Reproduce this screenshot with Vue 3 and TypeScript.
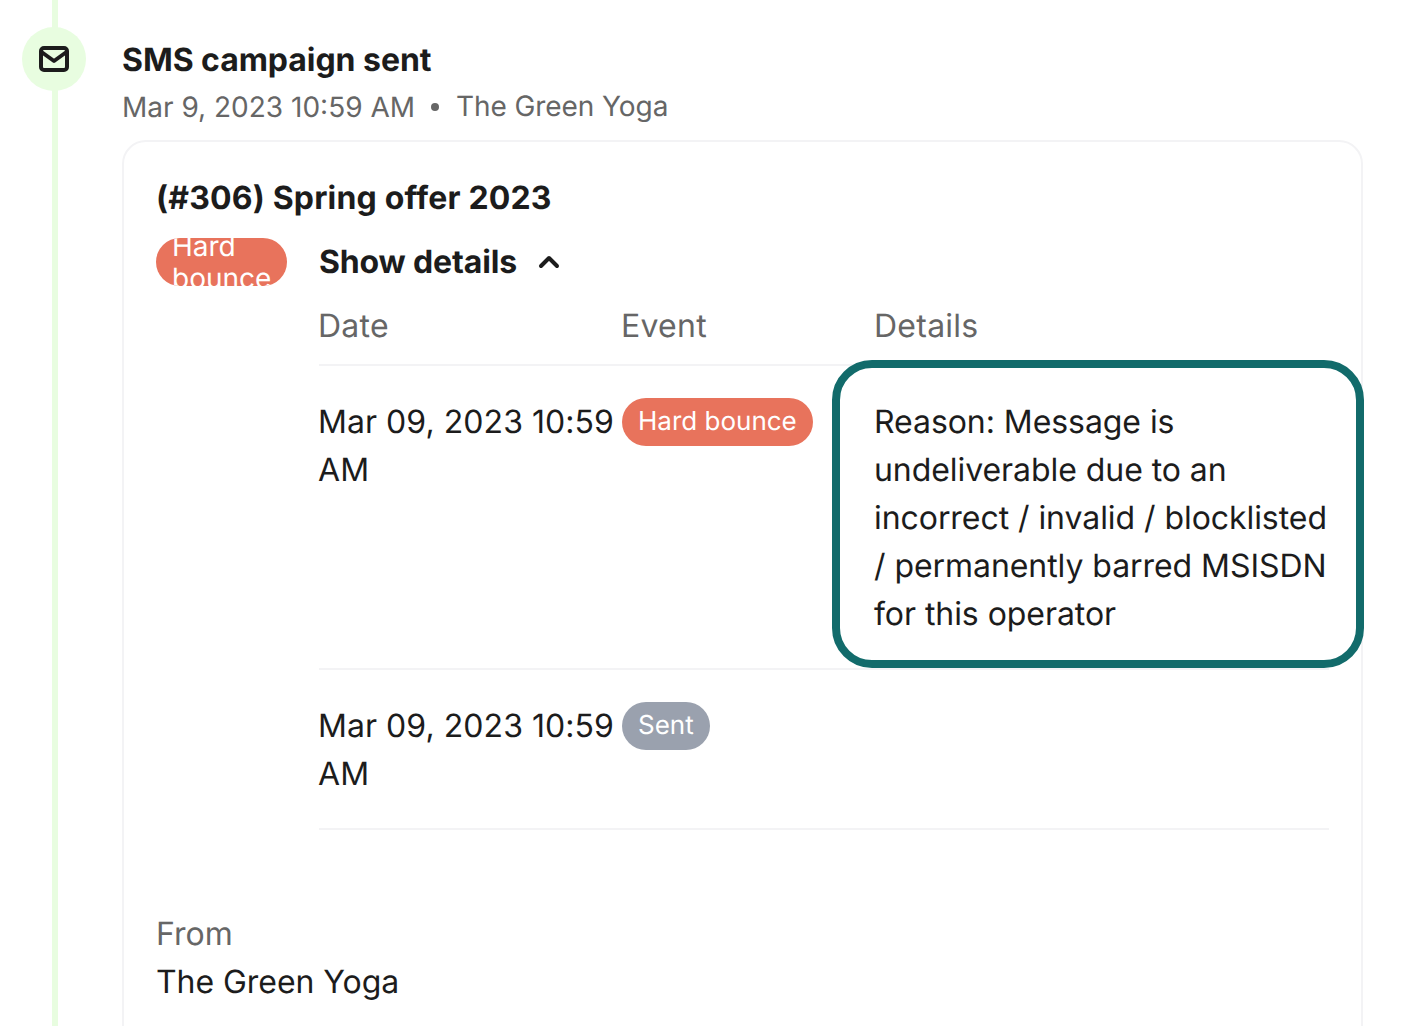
<script setup lang="ts">
interface Row { date: string; event: string; kind: string; details: string }
const rows: Row[] = [
  { date: 'Mar 09, 2023 10:59 AM', event: 'Hard bounce', kind: 'bounce', details: 'Reason: Message is undeliverable due to an incorrect / invalid / blocklisted / permanently barred MSISDN for this operator' },
  { date: 'Mar 09, 2023 10:59 AM', event: 'Sent', kind: 'sent', details: '' },
]
</script>

<template>
  <div class="page">
    <div class="rail"><div class="line"></div>
      <div class="dot">
        <svg width="34" height="30" viewBox="0 0 34 30" fill="none" stroke="#1c1c1c" stroke-width="4" stroke-linejoin="round" stroke-linecap="round">
          <rect x="4" y="4" width="26" height="22" rx="3" />
          <path d="M4.5 8 L17 17 L29.5 8" />
        </svg>
      </div>
    </div>
    <div class="main">
      <h1 class="title">SMS campaign sent</h1>
      <div class="meta"><span>Mar 9, 2023 10:59 AM</span><i class="sep"></i><span class="org">The Green Yoga</span></div>
      <section class="card">
        <h2 class="name">(#306) Spring offer 2023</h2>
        <div class="body">
          <span class="badge bounce wrap"><span>Hard bounce</span></span>
          <div class="detail">
            <div class="toggle">
              <span>Show details</span>
              <svg width="24" height="16" viewBox="0 0 24 16" fill="none" stroke="#1c1c1c" stroke-width="4" stroke-linecap="round" stroke-linejoin="round"><path d="M4 12 L12 4 L20 12" /></svg>
            </div>
            <table class="events">
              <thead><tr><th class="c1"><div class="nudge">Date</div></th><th class="c2"><div class="nudge">Event</div></th><th><div class="nudge">Details</div></th></tr></thead>
              <tbody>
                <tr v-for="(r, i) in rows" :key="i">
                  <td class="c1"><div class="nudge date">{{ r.date }}</div></td>
                  <td class="c2"><span class="badge" :class="r.kind">{{ r.event }}</span></td>
                  <td><div class="nudge reason">{{ r.details }}</div></td>
                </tr>
              </tbody>
            </table>
            <div class="highlight"></div>
          </div>
        </div>
        <div class="from">
          <div class="label">From</div>
          <div class="sender">The Green Yoga</div>
        </div>
      </section>
    </div>
  </div>
</template>

<style>
html, body { margin: 0; background: #fff; overflow: hidden; }
</style>

<style scoped>
.page { width: 1414px; height: 1026px; overflow: hidden; display: flex; font-family: Inter, sans-serif; font-size: 32px; line-height: 48px; color: #1c1c1c; background: #fff; padding-left: 22px; padding-right: 51px; box-sizing: border-box; text-rendering: geometricPrecision; }
.rail { width: 64px; position: relative; flex: none; margin-right: 36px; }
.line { position: absolute; left: 30px; top: 0; bottom: 0; width: 6px; background: #e8fde0; }
.dot { position: absolute; left: 0; top: 27px; width: 64px; height: 64px; border-radius: 50%; background: #e8fde0; display: flex; align-items: center; justify-content: center; }
.main { flex: 1; min-width: 0; padding-top: 36px; }
.title { margin: 0; font-size: 32px; line-height: 48px; font-weight: 700; letter-spacing: -0.05px; }
.meta { display: flex; align-items: center; font-size: 28px; line-height: 48px; height: 46px; color: #666; margin-bottom: 10px; }
.sep { width: 8px; height: 8px; border-radius: 50%; background: #666; margin: 0 18px 0 16px; }
.org { position: relative; top: -1px; letter-spacing: -0.08px; margin-left: -1px; }
.card { border: 2px solid #f3f3f5; border-radius: 24px; padding: 32px; min-height: 1000px; box-sizing: border-box; }
.name { margin: 0 0 16px; font-size: 32px; line-height: 48px; font-weight: 700; letter-spacing: 0.17px; }
.body { display: flex; align-items: flex-start; gap: 32px; }
.badge { display: inline-flex; align-items: center; height: 48px; padding: 0 16px; border-radius: 24px; color: #fff; font-size: 26px; line-height: 32px; box-sizing: border-box; overflow: hidden; white-space: nowrap; vertical-align: top; }
.badge.wrap { width: 131px; flex: none; white-space: normal; font-size: 28px; }
.bounce { background: #e8735c; }
.sent { background: #9aa1ae; }
.detail { flex: 1; position: relative; min-width: 0; }
.toggle { display: flex; align-items: center; gap: 20px; font-weight: 700; margin: 0 0 16px; letter-spacing: -0.15px; }
.events { width: 100%; border-collapse: collapse; table-layout: fixed; }
.events th { text-align: left; font-weight: 400; color: #666; padding: 0 0 14px; border-bottom: 2px solid #f3f3f5; letter-spacing: 0.25px; }
.events td { vertical-align: top; padding: 32px 0 30px; border-bottom: 2px solid #f3f3f5; }
.nudge { margin-left: -1px; }
.date { letter-spacing: 0.05px; }
.reason { letter-spacing: -0.06px; }
.c1 { width: 303px; }
.c2 { width: 253px; }
.highlight { position: absolute; left: 513px; top: 122px; width: 532px; height: 308px; border: 8px solid #126b6b; border-radius: 40px; box-sizing: border-box; }
.from { margin-top: 80px; }
.label { color: #666; }
.sender { letter-spacing: -0.05px; }
</style>
